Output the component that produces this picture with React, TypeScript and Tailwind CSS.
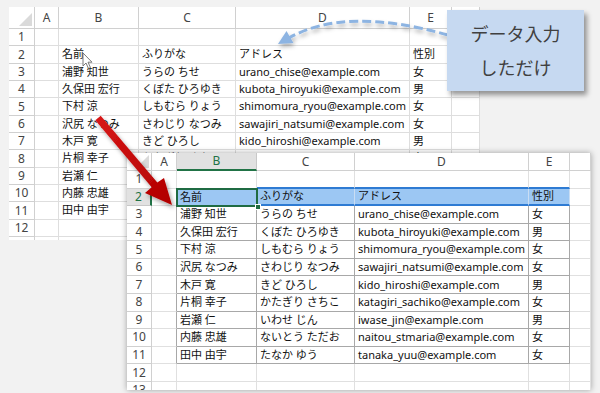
import React from "react";

const rows: string[][] = [
  ["", "", "", ""],
  ["名前", "ふりがな", "アドレス", "性別"],
  ["浦野 知世", "うらの ちせ", "urano_chise@example.com", "女"],
  ["久保田 宏行", "くぼた ひろゆき", "kubota_hiroyuki@example.com", "男"],
  ["下村 涼", "しもむら りょう", "shimomura_ryou@example.com", "女"],
  ["沢尻 なつみ", "さわじり なつみ", "sawajiri_natsumi@example.com", "女"],
  ["木戸 寛", "きど ひろし", "kido_hiroshi@example.com", "男"],
  ["片桐 幸子", "かたぎり さちこ", "katagiri_sachiko@example.com", "女"],
  ["岩瀬 仁", "いわせ じん", "iwase_jin@example.com", "男"],
  ["内藤 忠雄", "ないとう ただお", "naitou_stmaria@example.com", "女"],
  ["田中 由宇", "たなか ゆう", "tanaka_yuu@example.com", "女"],
  ["", "", "", ""],
  ["", "", "", ""],
];

const font = { fontFamily: '"Noto Sans", "Noto Sans CJK JP", sans-serif' };

function Corner() {
  return (
    <div className="relative border-r border-b border-[#d0d0d0]">
      <svg className="absolute right-[2px] bottom-[2px]" width="13" height="13" viewBox="0 0 13 13">
        <polygon points="13,0 13,13 0,13" fill="#dadada" />
      </svg>
    </div>
  );
}

function TopSheet() {
  const letters = ["A", "B", "C", "D", "E", ""];
  return (
    <div className="grid grid-cols-[26px_24px_80px_97px_174px_42px_28px] grid-rows-[22px_repeat(13,17.35px)] w-[471px] h-[233px] overflow-hidden bg-white">
      <Corner />
      {letters.map((l, i) => (
        <div key={"h" + i} className="flex items-center justify-center border-r border-b border-[#d0d0d0] text-[12px] text-[#444]">
          {l}
        </div>
      ))}
      {rows.map((r, ri) => (
        <React.Fragment key={ri}>
          <div className="flex items-center justify-center border-r border-b border-[#d0d0d0] text-[12px] text-[#444]">
            {ri < 12 ? ri + 1 : ""}
          </div>
          <div className="border-r border-b border-[#dedede]" />
          {r.map((c, ci) => (
            <div key={ci} className="flex items-center overflow-hidden whitespace-nowrap pl-[3px] border-r border-b border-[#dedede] text-[11px] text-[#111]">
              {c}
            </div>
          ))}
          <div className="border-r border-b border-[#dedede]" />
        </React.Fragment>
      ))}
    </div>
  );
}

function BottomSheet() {
  const letters = ["A", "B", "C", "D", "E", ""];
  const light = "border-[#e0e0e0]";
  return (
    <div className="absolute left-[127px] top-[153px] grid grid-cols-[25px_25px_80px_98px_174px_41px_21px] grid-rows-[18px_repeat(13,17.58px)] w-[464px] h-[237px] overflow-hidden bg-white shadow-[0_0_6px_rgba(0,0,0,0.35)]">
      <Corner />
      {letters.map((l, i) =>
        i === 1 ? (
          <div key={"h" + i} className="flex items-center justify-center border-r border-r-[#c8c8c8] border-b-2 border-b-[#217346] bg-[#e1e1e1] text-[12px] text-[#217346]">
            {l}
          </div>
        ) : (
          <div key={"h" + i} className="flex items-center justify-center border-r border-b border-[#d0d0d0] text-[12px] text-[#444]">
            {l}
          </div>
        )
      )}
      {rows.map((r, ri) => {
        const rn = ri + 1;
        const inTable = rn >= 2 && rn <= 11;
        return (
          <React.Fragment key={ri}>
            {rn === 2 ? (
              <div className="flex items-center justify-center border-r-2 border-r-[#217346] border-b border-b-[#c8c8c8] bg-[#e1e1e1] text-[12px] text-[#217346]">
                {rn}
              </div>
            ) : (
              <div className="flex items-center justify-center border-r border-b border-[#d0d0d0] text-[12px] leading-[14px] text-[#444]">
                {rn}
              </div>
            )}
            <div className={"border-r border-b " + (inTable ? "border-r-[#a8a8a8] border-b-[#e0e0e0]" : light)} />
            {r.map((c, ci) => {
              if (rn === 2 && ci === 0) {
                return (
                  <div key={ci} className="relative flex items-center whitespace-nowrap pl-[3px] bg-[#9cc7f3] text-[11px] text-[#111]">
                    {c}
                    <div className="absolute inset-[-1px] border-2 border-[#1f6b43]" />
                    <div className="absolute right-[-4px] bottom-[-4px] w-[6px] h-[6px] bg-[#1f6b43] border border-white" />
                  </div>
                );
              }
              if (rn === 2) {
                return (
                  <div key={ci} className="flex items-center whitespace-nowrap pl-[3px] bg-[#9cc7f3] border-r border-r-[#c9ddf3] border-b-2 border-b-[#2e7bd3] text-[11px] text-[#111]">
                    {c}
                  </div>
                );
              }
              if (rn === 1) {
                return (
                  <div key={ci} className={"border-r border-r-[#e0e0e0] " + (ci === 0 ? "border-b border-b-[#a8a8a8]" : "border-b-2 border-b-[#2e7bd3]")} />
                );
              }
              const rb = inTable ? "border-r-[#a8a8a8]" : "border-r-[#e0e0e0]";
              const bb = inTable ? "border-b-[#a8a8a8]" : "border-b-[#e0e0e0]";
              return (
                <div key={ci} className={"flex items-center overflow-hidden whitespace-nowrap pl-[3px] border-r border-b text-[11px] text-[#111] " + rb + " " + bb}>
                  {c}
                </div>
              );
            })}
            <div className={"border-r border-b " + light} />
          </React.Fragment>
        );
      })}
    </div>
  );
}

function Overlay() {
  return (
    <svg className="absolute left-0 top-0 pointer-events-none" width="600" height="393" viewBox="0 0 600 393">
      <defs>
        <filter id="sh" x="-20%" y="-20%" width="140%" height="140%">
          <feDropShadow dx="2" dy="3" stdDeviation="2" floodColor="#000" floodOpacity="0.35" />
        </filter>
        <filter id="sh2" x="-20%" y="-50%" width="140%" height="200%">
          <feDropShadow dx="1" dy="3" stdDeviation="2" floodColor="#000" floodOpacity="0.3" />
        </filter>
        <linearGradient id="rg" x1="0" y1="0" x2="1" y2="1">
          <stop offset="0" stopColor="#d81818" />
          <stop offset="1" stopColor="#b00000" />
        </linearGradient>
      </defs>
      {/* cursor */}
      <path d="M83 53 L83 66 L86 63 L88.5 68.5 L90.5 67.6 L88 62.2 L92 62.2 Z" fill="#fff" stroke="#6b6b6b" strokeWidth="0.9" strokeLinejoin="round" />
      {/* red arrow */}
      <polygon
        points="100.7,115.7 157.3,182.6 164,178 172,205 145,193 151.7,187.2 95.3,120.3"
        fill="url(#rg)"
        filter="url(#sh)"
      />
      {/* blue dashed arc */}
      <g filter="url(#sh2)">
        <path d="M448 35 Q 345 6 289 38" fill="none" stroke="#8db4e2" strokeWidth="3" strokeDasharray="9 4" />
        <polygon points="278,44 286.5,31 293.5,43" fill="#8db4e2" />
      </g>
    </svg>
  );
}

export default function App() {
  return (
    <div className="relative w-[600px] h-[393px] overflow-hidden bg-[#f2f2f2]" style={font}>
      <div className="pl-[9px] pt-[7px]">
        <TopSheet />
      </div>
      <BottomSheet />
      <Overlay />
      <div className="absolute left-[447px] top-[10px] w-[137px] h-[81px] flex flex-col items-center justify-center gap-[8px] bg-[#c6d9f1] shadow-[3px_4px_5px_rgba(0,0,0,0.4)] text-[18px] leading-[26px] text-[#404040]">
        <div>データ入力</div>
        <div>しただけ</div>
      </div>
    </div>
  );
}
